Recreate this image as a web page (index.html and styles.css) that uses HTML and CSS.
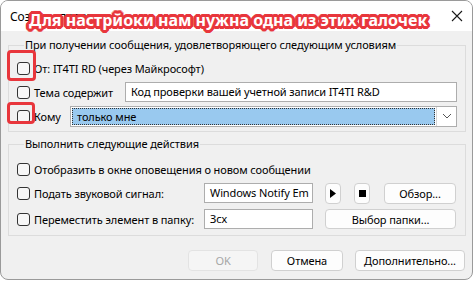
FILE: index.html
```html
<!DOCTYPE html>
<html lang="ru">
<head>
<meta charset="utf-8">
<link rel="stylesheet" href="styles.css">
</head>
<body>
<div class="window">
  <div class="titlebar">
    <span class="title">Создать правило</span>
    <svg class="close" width="12" height="12" viewBox="0 0 12 12"><path d="M1 1L11 11M11 1L1 11" stroke="#1a1a1a" stroke-width="1.1" fill="none"/></svg>
  </div>
  <div class="body">
    <fieldset class="group g1">
      <legend>При получении сообщения, удовлетворяющего следующим условиям</legend>
      <div class="row">
        <span class="cb"></span><span class="lbl">От: IT4TI RD (через Майкрософт)</span>
      </div>
      <div class="row">
        <span class="cb"></span><span class="lbl w-subj">Тема содержит</span>
        <div class="input subj">Код проверки вашей учетной записи IT4TI R&amp;D</div>
      </div>
      <div class="row">
        <span class="cb"></span><span class="lbl w-to">Кому</span>
        <div class="combo">
          <div class="combo-field"><span>только мне</span></div>
          <div class="combo-btn"><svg width="10" height="6" viewBox="0 0 10 6"><path d="M1 1L5 5L9 1" stroke="#555" stroke-width="1" fill="none"/></svg></div>
        </div>
      </div>
    </fieldset>
    <fieldset class="group g2">
      <legend>Выполнить следующие действия</legend>
      <div class="row">
        <span class="cb"></span><span class="lbl">Отобразить в окне оповещения о новом сообщении</span>
      </div>
      <div class="row">
        <span class="cb"></span><span class="lbl w-act">Подать звуковой сигнал:</span>
        <div class="input short">Windows Notify Em</div>
        <button class="btn icon play"><svg width="6" height="9" viewBox="0 0 6 9"><path d="M0 0L6 4.5L0 9Z" fill="#000"/></svg></button>
        <button class="btn icon stop"><span class="sq"></span></button>
        <button class="btn browse">Обзор...</button>
      </div>
      <div class="row r3">
        <span class="cb"></span><span class="lbl w-act">Переместить элемент в папку:</span>
        <div class="input short">Зсх</div>
        <button class="btn folder">Выбор папки...</button>
      </div>
    </fieldset>
    <div class="buttons">
      <button class="btn ok" disabled>OK</button>
      <button class="btn cancel">Отмена</button>
      <button class="btn more">Дополнительно...</button>
    </div>
  </div>
  <div class="annot">Для настрйоки нам нужна одна из этих галочек</div>
  <div class="mark m1"></div>
  <div class="mark m2"></div>
</div>
</body>
</html>
```
FILE: styles.css
```css
* { box-sizing: border-box; }
html, body { margin: 0; padding: 0; background: #ffffff; }
body {
  width: 474px; height: 281px; overflow: hidden;
  font-family: "Noto Sans", "Open Sans", sans-serif;
  font-size: 11px; letter-spacing: -0.1px; color: #000;
}
.window {
  position: relative;
  width: 473px; height: 280px;
  border: 1px solid #9a9a9a;
  border-radius: 8px;
  background: #f0f0f0;
  overflow: hidden;
  display: flex; flex-direction: column;
}
.titlebar {
  height: 30px; flex: none;
  background: #ffffff;
  display: flex; align-items: center; justify-content: space-between;
  padding: 0 9px 0 9px;
}
.title { font-size: 12px; line-height: 16px; margin-top: 1px; }
.group {
  margin: 0; border: 1px solid #dcdcdc; border-radius: 0;
  min-width: 0;
}
.body {
  flex: 1;
  padding: 6px 6px 0 7px;
  display: flex; flex-direction: column;
}
.group legend {
  padding: 0 1px; margin-left: 7px;
  line-height: 16px;
}
.g1 { padding: 5px 8px 5px 8px; display: flex; flex-direction: column; gap: 4px; }
.g2 { margin-top: 4px; padding: 7px 9px 6px 8px; display: flex; flex-direction: column; gap: 4px; }
.g2 .r3 { margin-top: 2px; }
.row { height: 20px; display: flex; align-items: center; }
.cb {
  width: 13px; height: 13px; flex: none;
  border: 1px solid #333; border-radius: 3px; background: #f7f7f7;
}
.lbl { margin-left: 4px; white-space: nowrap; }
.w-subj { width: 91px; }
.w-to { width: 36px; }
.w-act { width: 170px; }
.input {
  height: 20px; background: #fff; border: 1px solid #adadad;
  padding: 0 5px; line-height: 18px; white-space: nowrap; overflow: hidden;
}
.subj { flex: 1; }
.short { width: 109px; flex: none; }
.combo { flex: 1; height: 21px; display: flex; border: 1px solid #adadad; background: #fff; }
.combo-field { flex: 1; padding: 1px; }
.combo-field span {
  display: block; height: 17px; background: #99c9ef;
  border: 1px dotted #333; line-height: 15px; padding-left: 4px;
}
.combo-btn {
  width: 20px; border-left: 1px solid #d6d6d6; background: #fff;
  display: flex; align-items: center; justify-content: center;
}
.btn {
  font-family: inherit; font-size: 11px; letter-spacing: -0.1px; color: #000;
  height: 20px; padding: 0;
  background: #fdfdfd; border: 1px solid #d0d0d0; border-radius: 4px;
  display: flex; align-items: center; justify-content: center;
}
.icon { width: 16px; height: 21px; }
.play { margin-left: 12px; }
.stop { margin-left: 13px; }
.sq { width: 7px; height: 7px; background: #000; display: block; }
.browse { margin-left: 14px; width: 72px; height: 21px; }
.folder { margin-left: 12px; width: 131px; }
.buttons {
  margin-top: 14px;
  display: flex; justify-content: flex-end; gap: 12px;
  padding-right: 1px;
}
.buttons .btn { height: 21px; }
.ok { width: 70px; color: #a6a6a6; background: #f5f5f5; border-color: #e3e3e3; margin-right: 1px; }
.cancel { width: 72px; }
.more { width: 110px; }
.annot {
  position: absolute; left: 28px; top: 9px;
  font-weight: 700; font-size: 16px; line-height: 20px; color: #fff;
  letter-spacing: 0;
  white-space: nowrap;
  text-shadow:
    3px 0 0 #e8363c, -3px 0 0 #e8363c, 0 3px 0 #e8363c, 0 -3px 0 #e8363c,
    2px 2px 0 #e8363c, -2px 2px 0 #e8363c, 2px -2px 0 #e8363c, -2px -2px 0 #e8363c,
    3px 1px 0 #e8363c, -3px 1px 0 #e8363c, 3px -1px 0 #e8363c, -3px -1px 0 #e8363c,
    1px 3px 0 #e8363c, -1px 3px 0 #e8363c, 1px -3px 0 #e8363c, -1px -3px 0 #e8363c;
}
.mark {
  position: absolute; border: 3px solid #e8363c; border-radius: 4px;
}
.m1 { left: 6px; top: 49px; width: 29px; height: 31px; }
.m2 { left: 6px; top: 101px; width: 28px; height: 22px; }
```
